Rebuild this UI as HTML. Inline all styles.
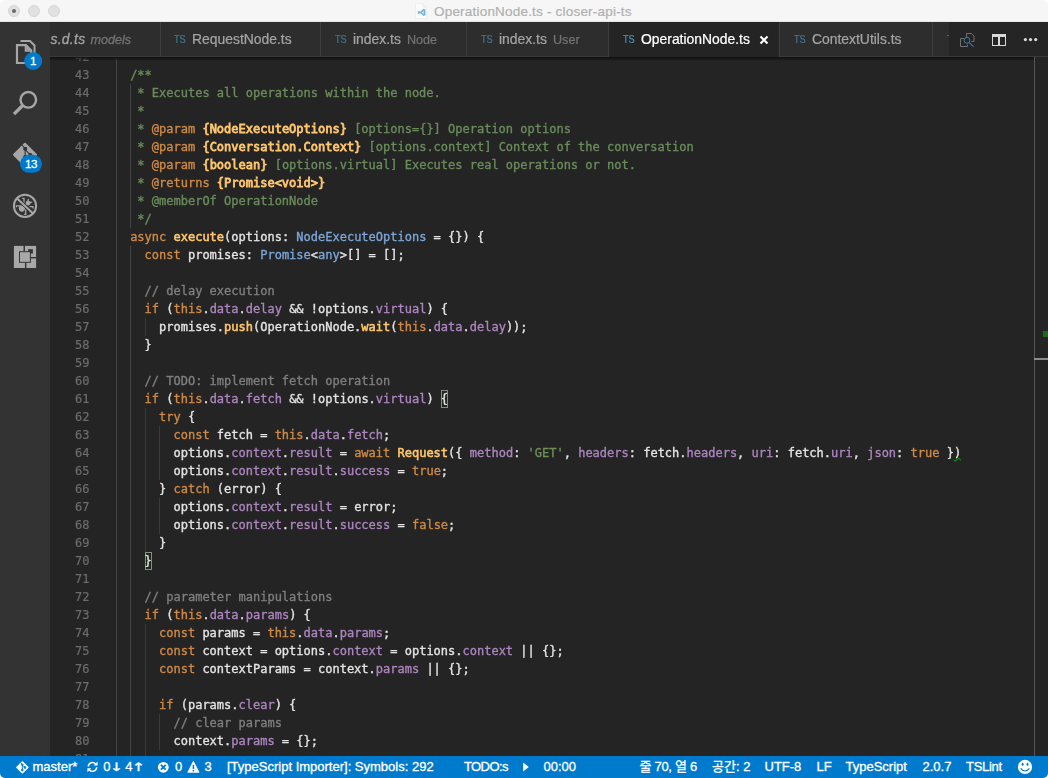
<!DOCTYPE html>
<html lang="ko">
<head>
<meta charset="utf-8">
<title>OperationNode.ts - closer-api-ts</title>
<style>
*{box-sizing:border-box;margin:0;padding:0}
html,body{width:1048px;height:778px;overflow:hidden;background:#fff}
body{font-family:"Liberation Sans","Noto Sans CJK KR",sans-serif;position:relative;color:#ccc}
#title{position:absolute;left:0;top:0;width:1048px;height:22px;background:#f6f6f6;border-radius:5px 5px 0 0;border-bottom:1px solid #e4e4e4}
#title .tl{position:absolute;top:5px;width:12px;height:12px;border-radius:50%;background:#e1e1e1;border:1px solid #d6d6d6}
#title .txt{position:absolute;left:434px;top:4px;font-size:13.5px;line-height:16px;color:#b0b0b0;white-space:nowrap;letter-spacing:0.2px;-webkit-text-stroke:0.2px}
#act{position:absolute;left:0;top:22px;width:50px;height:734px;background:#333333}
#tabs{position:absolute;left:50px;top:22px;width:998px;height:35px;background:#252526;overflow:hidden}
.tab{position:absolute;top:0;height:35px;background:#2d2d2d;border-right:1px solid #3d3d3d;border-bottom:1px solid #3a3a3a;font-size:13.9px;line-height:35px;color:#a4a4a4;white-space:nowrap;-webkit-text-stroke:0.22px}
.tab span{position:absolute;top:0;margin-left:-1px}
.tab .ts{font-size:10.7px;color:#44748e;top:-0.3px;margin-left:-1px;transform:scaleX(0.86);transform-origin:0 50%}
.tab .d{color:#737373;font-size:12.6px;top:0.5px}
.tab.on{background:#242424;color:#fff;border-bottom:none}
.tab.on .ts{color:#4b8fb3}
#tabact{position:absolute;left:899px;top:0;width:99px;height:35px;background:#252526;border-bottom:1px solid #3a3a3a}
#ed{position:absolute;left:50px;top:57px;width:998px;height:699px;background:#242424;overflow:hidden;font-family:"DejaVu Sans Mono","Liberation Mono",monospace;font-size:12px;line-height:18px}
#ed .sh{position:absolute;left:0;top:0;width:984px;height:4px;background:linear-gradient(#101010,rgba(16,16,16,0))}
.ln{position:absolute;left:0;width:39.5px;text-align:right;color:#6c6c6c;height:18px;-webkit-text-stroke:0.2px}
.cl{position:absolute;left:65.7px;height:18px;white-space:pre;color:#e4e4e4;-webkit-text-stroke:0.34px}
.g{position:absolute;width:1px;background:#3a3a3a}.g2{background:#454545}
.k{color:#d08a45}.f{color:#ffc66d;-webkit-text-stroke:0.55px}.t{color:#7ba6d8}.p{color:#ad85c0}.s{color:#6e9058}.c{color:#7f7f7f}.d{color:#6a8c5b}.a{color:#d08a45}.b{color:#ffc66d;-webkit-text-stroke:0.8px}.n{color:#e4e4e4}
.br{position:absolute;width:7.3px;height:18px;background:#1b2a1b;box-shadow:inset 0 0 0 1px #8a8a8a}
#status{position:absolute;left:0;top:756px;width:1048px;height:22px;background:#007acc;color:#fff;font-size:13px;line-height:22px;white-space:nowrap;-webkit-text-stroke:0.3px;border-radius:0 0 5px 5px}
#status span{position:absolute;top:0}
.ar{font-family:"DejaVu Sans",sans-serif;font-weight:normal;font-size:11.5px;margin-left:-0.3px;position:relative;top:-0.5px;display:inline-block;transform:scaleX(1.4);transform-origin:0 50%}
</style>
</head>
<body>
<div id="title">
  <i class="tl" style="left:8px"></i><i class="tl" style="left:28px"></i><i class="tl" style="left:48px"></i>
  <i style="position:absolute;left:12px;top:9px;width:4px;height:4px;border-radius:50%;background:#6a6a6a"></i>
  <svg style="position:absolute;left:414px;top:2px" width="14" height="18" viewBox="0 0 14 18"><path d="M1.5 1.5 H9 L12.5 5 V16.5 H1.5 Z" fill="#fbfbfb" stroke="#ececec" stroke-width="0.8"/><path d="M9 1.5 V5 H12.5" fill="#f0f0f0" stroke="#e6e6e6" stroke-width="0.6"/><path d="M9.6 6.8 L11.4 7.6 V13.2 L9.6 14 L6.2 11 L4.9 12.1 L4.2 11.7 V9.1 L4.9 8.7 L6.2 9.8 Z M9.6 8.9 L7.6 10.4 L9.6 11.9 Z" fill="#6fb2e6" fill-rule="evenodd"/></svg>
  <div class="txt">OperationNode.ts - closer-api-ts</div>
</div>
<div id="act">
<svg style="position:absolute;left:0;top:0" width="50" height="300" viewBox="0 22 50 300">
<g fill="none" stroke="#a6a6a6" stroke-width="2">
 <path d="M20.5 41 H30 L34.5 45.5 V57.5 H31.5" />
 <path d="M17 45.2 H26 L31.2 50.4 V63 H17 Z" stroke-width="2.2"/>
 <path d="M25.5 45.5 V51 H31" stroke-width="1.6"/>
 <circle cx="28.3" cy="99.8" r="7.8" stroke-width="2.4"/>
 <path d="M22.6 105.5 L14 114.1" stroke-width="3.4" />
</g>
<path d="M26.2 46 L30.6 50.4 H26.2 Z" fill="#a6a6a6"/>
<circle cx="33.2" cy="61" r="9" fill="#007acc"/>
<text x="33.2" y="65" font-size="11.5" stroke="#fff" stroke-width="0.3" fill="#fff" text-anchor="middle" font-family="Liberation Sans, sans-serif">1</text>
<!-- git -->
<g transform="translate(25 154.8) rotate(45)"><rect x="-8.8" y="-8.8" width="17.6" height="17.6" rx="1" fill="#a6a6a6"/></g>
<g stroke="#333" stroke-width="1.1" fill="#333"><path d="M21.5 144.5 L25.2 148.6 V157 M25.2 149.5 L30.5 155.2" fill="none"/><circle cx="25.2" cy="148.8" r="1.5"/><circle cx="25.2" cy="157" r="1.5"/><circle cx="30.3" cy="155" r="1.5"/></g>
<rect x="20" y="154.8" width="22" height="18" rx="9" fill="#007acc"/>
<text x="31" y="167.9" font-size="11.5" stroke="#fff" stroke-width="0.3" fill="#fff" text-anchor="middle" font-family="Liberation Sans, sans-serif" letter-spacing="-0.3">13</text>
<!-- debug -->
<g fill="none" stroke="#a8a8a8">
<circle cx="25" cy="205.9" r="11.1" stroke-width="2"/>
<path d="M16.4 207.2 V205.9 H21 M22.2 198.4 H24 V202.4 M28.6 199 L27.8 201.4 M29.2 202.4 H32.2 M29.6 206.6 H33 V208.4 M25.7 209.6 V214.4 H24" stroke-width="1.3"/>
</g>
<circle cx="21.9" cy="208.6" r="3.1" fill="#a8a8a8"/>
<circle cx="28" cy="203.2" r="2.4" fill="#a8a8a8"/>
<path d="M18 199.2 L31.5 212" stroke="#333" stroke-width="3.4" fill="none"/>
<path d="M16.6 197.9 L32.8 213.2" stroke="#a8a8a8" stroke-width="2" fill="none"/>
<!-- extensions -->
<rect x="13.9" y="245.9" width="22.2" height="22.1" fill="#a8a8a8"/>
<rect x="28.1" y="249.2" width="4.8" height="4.3" fill="#333"/>
<rect x="23.5" y="245.5" width="1.45" height="6" fill="#333"/>
<rect x="30.5" y="257" width="6" height="1.4" fill="#333"/>
<rect x="24.96" y="262.5" width="1.45" height="6" fill="#333"/>
<rect x="19" y="251.2" width="11.9" height="11.6" fill="#333"/>
<rect x="20" y="252.2" width="9.9" height="9.6" fill="#a8a8a8"/>
</svg>
</div>
<div id="tabs"><div style="position:absolute;left:0;top:0;width:998px;height:35px;will-change:transform">
  <div class="tab" style="left:-49px;width:160px;-webkit-text-stroke:0.3px"><span style="right:74.6px;font-style:italic;letter-spacing:0.3px">types.d.ts</span><span class="d" style="left:90.5px;font-style:italic">models</span></div>
  <div class="tab" style="left:111px;width:160px"><span class="ts" style="left:14px">TS</span><span style="left:32px">RequestNode.ts</span></div>
  <div class="tab" style="left:271px;width:146px"><span class="ts" style="left:15px">TS</span><span style="left:33px">index.ts</span><span class="d" style="left:87px">Node</span></div>
  <div class="tab" style="left:417px;width:142px"><span class="ts" style="left:15px">TS</span><span style="left:33px">index.ts</span><span class="d" style="left:87px">User</span></div>
  <div class="tab on" style="left:559px;width:171px"><span class="ts" style="left:15px">TS</span><span style="left:33px">OperationNode.ts</span>
    <svg style="position:absolute;left:150px;top:13px" width="10" height="10" viewBox="0 0 10 10"><path d="M1.5 1.5 L8.5 8.5 M8.5 1.5 L1.5 8.5" stroke="#fff" stroke-width="2.1"/></svg></div>
  <div class="tab" style="left:730px;width:153px"><span class="ts" style="left:15px">TS</span><span style="left:33px">ContextUtils.ts</span></div>
  <div class="tab" style="left:883px;width:150px"><span class="ts" style="left:15px">TS</span></div>
  </div><div id="tabact">
<svg style="position:absolute;left:0;top:0" width="99" height="35" viewBox="949 22 99 35">
<g fill="none" stroke="#707070" stroke-width="1">
<path d="M966.5 38 V33.5 H971.5 L974 36 V41.5 H971.5"/>
<path d="M964 38.5 H960.5 V46.5 H967.5 V44.5"/>
</g>
<circle cx="967" cy="40.3" r="2.9" fill="none" stroke="#457a9f" stroke-width="0.95"/>
<path d="M969.2 42.6 L973.6 46.6" stroke="#457a9f" stroke-width="1.15"/>
<path d="M992 34 H1006 V46 H992 Z M993 37 V45 H998 V37 Z M1000 37 V45 H1005 V37 Z" fill="#d8d8d8" fill-rule="evenodd"/>
<circle cx="1025.4" cy="39.6" r="1.6" fill="#dcdcdc"/><circle cx="1030.5" cy="39.6" r="1.6" fill="#dcdcdc"/><circle cx="1035.7" cy="39.6" r="1.6" fill="#dcdcdc"/>
</svg>
</div>
</div>
<div id="ed">
<div id="code" style="position:absolute;left:0;top:0;width:984px;height:699px;will-change:transform">
<i class="g g2" style="left:66px;top:-9px;height:720px"></i>
<i class="g g2" style="left:80px;top:27px;height:144px"></i>
<i class="g g2" style="left:80px;top:189px;height:522px"></i>
<i class="g" style="left:95px;top:261px;height:18px"></i>
<i class="g" style="left:95px;top:351px;height:144px"></i>
<i class="g" style="left:95px;top:567px;height:144px"></i>
<i class="g" style="left:109px;top:369px;height:54px"></i>
<i class="g" style="left:109px;top:441px;height:36px"></i>
<i class="g" style="left:109px;top:657px;height:36px"></i>
<i class="br" style="left:390.8px;top:333px"></i>
<i class="br" style="left:94.6px;top:495px"></i>
<div class="ln" style="top:-9px">42</div>
<div class="cl" style="top:-9px"></div>
<div class="ln" style="top:9px">43</div>
<div class="cl" style="top:9px"><span class="d">  /**</span></div>
<div class="ln" style="top:27px">44</div>
<div class="cl" style="top:27px"><span class="d">   * Executes all operations within the node.</span></div>
<div class="ln" style="top:45px">45</div>
<div class="cl" style="top:45px"><span class="d">   *</span></div>
<div class="ln" style="top:63px">46</div>
<div class="cl" style="top:63px"><span class="d">   * </span><span class="a">@param</span><span class="d"> </span><span class="b">{NodeExecuteOptions}</span><span class="d"> [options={}] Operation options</span></div>
<div class="ln" style="top:81px">47</div>
<div class="cl" style="top:81px"><span class="d">   * </span><span class="a">@param</span><span class="d"> </span><span class="b">{Conversation.Context}</span><span class="d"> [options.context] Context of the conversation</span></div>
<div class="ln" style="top:99px">48</div>
<div class="cl" style="top:99px"><span class="d">   * </span><span class="a">@param</span><span class="d"> </span><span class="b">{boolean}</span><span class="d"> [options.virtual] Executes real operations or not.</span></div>
<div class="ln" style="top:117px">49</div>
<div class="cl" style="top:117px"><span class="d">   * </span><span class="a">@returns</span><span class="d"> </span><span class="b">{Promise&lt;void&gt;}</span></div>
<div class="ln" style="top:135px">50</div>
<div class="cl" style="top:135px"><span class="d">   * @memberOf OperationNode</span></div>
<div class="ln" style="top:153px">51</div>
<div class="cl" style="top:153px"><span class="d">   */</span></div>
<div class="ln" style="top:171px">52</div>
<div class="cl" style="top:171px"><span class="n">  </span><span class="k">async</span><span class="n"> </span><span class="f">execute</span><span class="n">(options: </span><span class="t">NodeExecuteOptions</span><span class="n"> = {}) {</span></div>
<div class="ln" style="top:189px">53</div>
<div class="cl" style="top:189px"><span class="n">    </span><span class="k">const</span><span class="n"> promises: </span><span class="t">Promise</span><span class="n">&lt;</span><span class="t">any</span><span class="n">&gt;[] = [];</span></div>
<div class="ln" style="top:207px">54</div>
<div class="cl" style="top:207px"></div>
<div class="ln" style="top:225px">55</div>
<div class="cl" style="top:225px"><span class="c">    // delay execution</span></div>
<div class="ln" style="top:243px">56</div>
<div class="cl" style="top:243px"><span class="n">    </span><span class="k">if</span><span class="n"> (</span><span class="k">this</span><span class="n">.</span><span class="p">data</span><span class="n">.</span><span class="p">delay</span><span class="n"> &amp;&amp; !options.</span><span class="p">virtual</span><span class="n">) {</span></div>
<div class="ln" style="top:261px">57</div>
<div class="cl" style="top:261px"><span class="n">      promises.</span><span class="f">push</span><span class="n">(OperationNode.</span><span class="f">wait</span><span class="n">(</span><span class="k">this</span><span class="n">.</span><span class="p">data</span><span class="n">.</span><span class="p">delay</span><span class="n">));</span></div>
<div class="ln" style="top:279px">58</div>
<div class="cl" style="top:279px"><span class="n">    }</span></div>
<div class="ln" style="top:297px">59</div>
<div class="cl" style="top:297px"></div>
<div class="ln" style="top:315px">60</div>
<div class="cl" style="top:315px"><span class="c">    // TODO: implement fetch operation</span></div>
<div class="ln" style="top:333px">61</div>
<div class="cl" style="top:333px"><span class="n">    </span><span class="k">if</span><span class="n"> (</span><span class="k">this</span><span class="n">.</span><span class="p">data</span><span class="n">.</span><span class="p">fetch</span><span class="n"> &amp;&amp; !options.</span><span class="p">virtual</span><span class="n">) </span><span class="n">{</span></div>
<div class="ln" style="top:351px">62</div>
<div class="cl" style="top:351px"><span class="n">      </span><span class="k">try</span><span class="n"> {</span></div>
<div class="ln" style="top:369px">63</div>
<div class="cl" style="top:369px"><span class="n">        </span><span class="k">const</span><span class="n"> fetch = </span><span class="k">this</span><span class="n">.</span><span class="p">data</span><span class="n">.</span><span class="p">fetch</span><span class="n">;</span></div>
<div class="ln" style="top:387px">64</div>
<div class="cl" style="top:387px"><span class="n">        options.</span><span class="p">context</span><span class="n">.</span><span class="p">result</span><span class="n"> = </span><span class="k">await</span><span class="n"> </span><span class="f">Request</span><span class="n">({ </span><span class="p">method</span><span class="n">: </span><span class="s">&#x27;GET&#x27;</span><span class="n">, </span><span class="p">headers</span><span class="n">: fetch.</span><span class="p">headers</span><span class="n">, </span><span class="p">uri</span><span class="n">: fetch.</span><span class="p">uri</span><span class="n">, </span><span class="p">json</span><span class="n">: </span><span class="k">true</span><span class="n"> }</span><span class="n">)</span></div>
<div class="ln" style="top:405px">65</div>
<div class="cl" style="top:405px"><span class="n">        options.</span><span class="p">context</span><span class="n">.</span><span class="p">result</span><span class="n">.</span><span class="p">success</span><span class="n"> = </span><span class="k">true</span><span class="n">;</span></div>
<div class="ln" style="top:423px">66</div>
<div class="cl" style="top:423px"><span class="n">      } </span><span class="k">catch</span><span class="n"> (error) {</span></div>
<div class="ln" style="top:441px">67</div>
<div class="cl" style="top:441px"><span class="n">        options.</span><span class="p">context</span><span class="n">.</span><span class="p">result</span><span class="n"> = error;</span></div>
<div class="ln" style="top:459px">68</div>
<div class="cl" style="top:459px"><span class="n">        options.</span><span class="p">context</span><span class="n">.</span><span class="p">result</span><span class="n">.</span><span class="p">success</span><span class="n"> = </span><span class="k">false</span><span class="n">;</span></div>
<div class="ln" style="top:477px">69</div>
<div class="cl" style="top:477px"><span class="n">      }</span></div>
<div class="ln" style="top:495px">70</div>
<div class="cl" style="top:495px"><span class="n">    </span><span class="n">}</span></div>
<div class="ln" style="top:513px">71</div>
<div class="cl" style="top:513px"></div>
<div class="ln" style="top:531px">72</div>
<div class="cl" style="top:531px"><span class="c">    // parameter manipulations</span></div>
<div class="ln" style="top:549px">73</div>
<div class="cl" style="top:549px"><span class="n">    </span><span class="k">if</span><span class="n"> (</span><span class="k">this</span><span class="n">.</span><span class="p">data</span><span class="n">.</span><span class="p">params</span><span class="n">) {</span></div>
<div class="ln" style="top:567px">74</div>
<div class="cl" style="top:567px"><span class="n">      </span><span class="k">const</span><span class="n"> params = </span><span class="k">this</span><span class="n">.</span><span class="p">data</span><span class="n">.</span><span class="p">params</span><span class="n">;</span></div>
<div class="ln" style="top:585px">75</div>
<div class="cl" style="top:585px"><span class="n">      </span><span class="k">const</span><span class="n"> context = options.</span><span class="p">context</span><span class="n"> = options.</span><span class="p">context</span><span class="n"> || {};</span></div>
<div class="ln" style="top:603px">76</div>
<div class="cl" style="top:603px"><span class="n">      </span><span class="k">const</span><span class="n"> contextParams = context.</span><span class="p">params</span><span class="n"> || {};</span></div>
<div class="ln" style="top:621px">77</div>
<div class="cl" style="top:621px"></div>
<div class="ln" style="top:639px">78</div>
<div class="cl" style="top:639px"><span class="n">      </span><span class="k">if</span><span class="n"> (params.</span><span class="p">clear</span><span class="n">) {</span></div>
<div class="ln" style="top:657px">79</div>
<div class="cl" style="top:657px"><span class="c">        // clear params</span></div>
<div class="ln" style="top:675px">80</div>
<div class="cl" style="top:675px"><span class="n">        context.</span><span class="p">params</span><span class="n"> = {};</span></div>
<div class="ln" style="top:693px">81</div>
<div class="cl" style="top:693px"></div>
</div>
<svg style="position:absolute;left:903px;top:400.3px" width="9" height="5" viewBox="0 0 9 5"><path d="M0.6 3.2 Q2 4.6 3.6 3 Q5.2 1 6.6 2 L7.8 3.4" fill="none" stroke="#0f8f0f" stroke-width="1.1"/></svg>
<div class="sh"></div>
<i style="position:absolute;left:984px;top:0;width:1px;height:699px;background:#555"></i>
<i style="position:absolute;left:993px;top:274px;width:5px;height:6px;background:#1b6b1b"></i>
<i style="position:absolute;left:984px;top:301px;width:14px;height:2px;background:#8c8c8c"></i>
</div>
<div id="status">
<svg style="position:absolute;left:0;top:0" width="1048" height="22" viewBox="0 756 1048 22">
<g transform="translate(22.4 767.4) rotate(45)"><rect x="-4.6" y="-4.6" width="9.2" height="9.2" rx="0.8" fill="#fff"/></g>
<g stroke="#007acc" stroke-width="0.9" fill="#007acc"><path d="M20.8 762.6 L22.3 764.4 V770 M22.4 765 L24.8 767.5" fill="none"/><circle cx="22.3" cy="764.8" r="0.8"/><circle cx="22.3" cy="769.9" r="0.9"/><circle cx="24.9" cy="767.5" r="0.9"/></g>
<g fill="none" stroke="#fff" stroke-width="1.5">
<path d="M88.3 766.6 A4.2 4.2 0 0 1 95.6 763.9"/><path d="M96.7 767.2 A4.2 4.2 0 0 1 89.4 769.9"/>
</g>
<path d="M97.6 761.6 V765.6 H93.6 Z M87.4 772.2 V768.2 H91.4 Z" fill="#fff"/>
<circle cx="163.3" cy="767.3" r="5.4" fill="#fff"/>
<path d="M160.9 764.9 L165.7 769.7 M165.7 764.9 L160.9 769.7" stroke="#007acc" stroke-width="1.8"/>
<path d="M193.4 761.3 L199 772.3 H187.8 Z" fill="#fff" stroke="#fff" stroke-width="0.8" stroke-linejoin="round"/>
<path d="M193.4 764.8 V769" stroke="#007acc" stroke-width="1.5"/><circle cx="193.4" cy="770.7" r="0.85" fill="#007acc"/>
<path d="M523.2 762.6 L528.8 767 L523.2 771.4 Z" fill="#fff"/>
<circle cx="1025" cy="766.9" r="7.1" fill="#fff"/>
<ellipse cx="1022.6" cy="764.3" rx="1" ry="1.5" fill="#007acc"/><ellipse cx="1027.5" cy="764.3" rx="1" ry="1.5" fill="#007acc"/>
<path d="M1020.6 768.4 Q1025 773.6 1029.4 768.4" fill="none" stroke="#007acc" stroke-width="1.2"/>
</svg>
<span style="left:32.5px">master*</span>
<span style="left:103.3px">0<b class="ar">↓</b></span><span style="left:125.3px">4<b class="ar">↑</b></span>
<span style="left:175px">0</span>
<span style="left:204.5px">3</span>
<span style="left:227px">[TypeScript Importer]: Symbols: 292</span>
<span style="left:464px;letter-spacing:-0.6px">TODO:s</span>
<span style="left:543.5px">00:00</span>
<span style="left:639.5px;letter-spacing:-0.3px">줄 70, 열 6</span>
<span style="left:712px">공간: 2</span>
<span style="left:764.5px">UTF-8</span>
<span style="left:816.5px">LF</span>
<span style="left:845.5px">TypeScript</span>
<span style="left:922.5px">2.0.7</span>
<span style="left:966px;letter-spacing:-0.3px">TSLint</span>
</div>
</body>
</html>
